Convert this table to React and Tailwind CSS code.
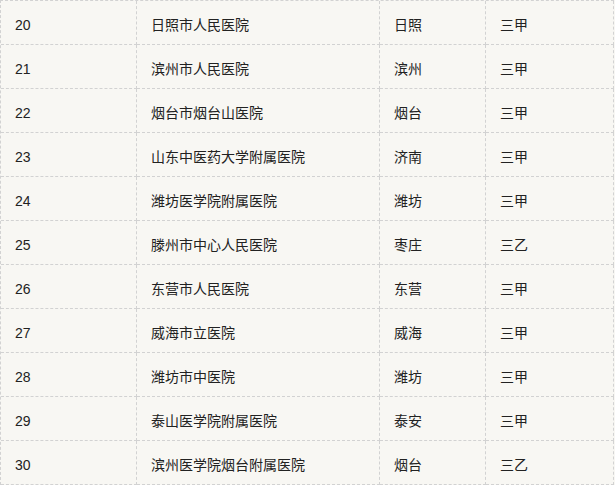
import React from "react";

const rows = [
  ["20", "日照市人民医院", "日照", "三甲"],
  ["21", "滨州市人民医院", "滨州", "三甲"],
  ["22", "烟台市烟台山医院", "烟台", "三甲"],
  ["23", "山东中医药大学附属医院", "济南", "三甲"],
  ["24", "潍坊医学院附属医院", "潍坊", "三甲"],
  ["25", "滕州市中心人民医院", "枣庄", "三乙"],
  ["26", "东营市人民医院", "东营", "三甲"],
  ["27", "威海市立医院", "威海", "三甲"],
  ["28", "潍坊市中医院", "潍坊", "三甲"],
  ["29", "泰山医学院附属医院", "泰安", "三甲"],
  ["30", "滨州医学院烟台附属医院", "烟台", "三乙"],
];

const cell =
  "h-[44px] border-r border-b border-dashed border-[#d2d2d2] flex items-center pl-[14px] pt-[5px] text-[14px] text-[#222]";

export default function App() {
  return (
    <div className="w-[615px] h-[485px] bg-[#f8f7f3] overflow-hidden">
      <div
        className="w-[614px] border-l border-t border-dashed border-[#d2d2d2] grid grid-cols-[136px_243px_106px_128px]"
        style={{ fontFamily: '"Liberation Sans", "Noto Sans CJK SC", sans-serif' }}
      >
        {rows.map((r) => (
          <React.Fragment key={r[0]}>
            <div className={cell + " text-[#2b2b33]"}>{r[0]}</div>
            <div className={cell}>{r[1]}</div>
            <div className={cell}>{r[2]}</div>
            <div className={cell}>{r[3]}</div>
          </React.Fragment>
        ))}
      </div>
    </div>
  );
}
